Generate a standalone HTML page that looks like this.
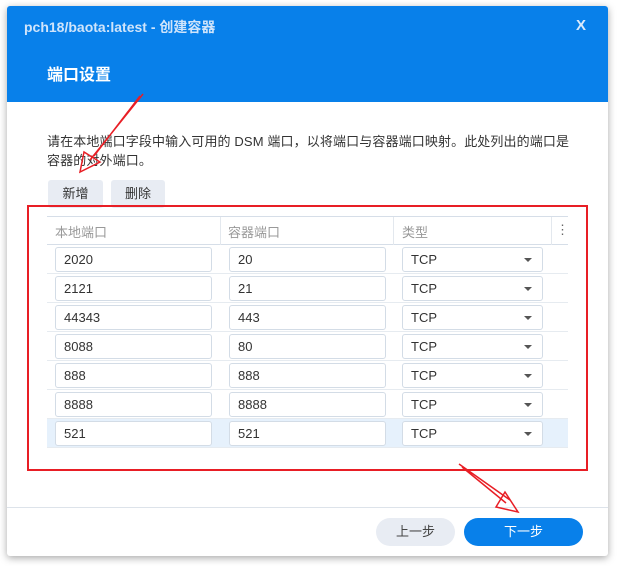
<!DOCTYPE html>
<html><head><meta charset="utf-8"><style>
*{box-sizing:border-box;margin:0;padding:0}
body{width:624px;height:566px;background:#fff;font-family:"Liberation Sans","Noto Sans CJK SC",sans-serif;position:relative;overflow:hidden}
.dlg{position:absolute;left:7px;top:6px;width:601px;height:550px;background:#fff;box-shadow:0 2px 8px rgba(0,0,0,.35);border-radius:3px;overflow:hidden}
.hd{position:absolute;left:0;top:0;width:601px;height:96px;background:#0880ea}
.t1{position:absolute;left:17px;top:11px;color:#cfe4fb;font-size:14px;font-weight:bold}
.x{position:absolute;right:22px;top:11px;color:#dbeafc;font-size:15px;font-weight:bold}
.t2{position:absolute;left:40px;top:55px;color:#fff;font-size:16px;font-weight:bold}
.desc{position:absolute;left:40px;top:126px;color:#333;font-size:13px;line-height:19px;width:560px;letter-spacing:0.12px}
.btn{position:absolute;top:174px;height:28px;background:#e8ecf3;border-radius:3px;font-size:13px;color:#333;line-height:28px;text-align:center}
.red{position:absolute;left:20px;top:199px;width:561px;height:266px;border:2px solid #e81e25}
.th{position:absolute;top:210px;height:29px;border-top:1px solid #d6dee8;border-bottom:1px solid #d6dee8;left:40px;width:521px;font-size:13px;color:#999}
.th span{position:absolute;top:5px}
.vl{position:absolute;top:0;width:1px;height:28px;background:#e3e8ee}
.row{position:absolute;left:40px;width:521px;height:29px;border-bottom:1px solid #e6ebf0}
.in{position:absolute;top:2px;height:25px;border:1px solid #d3dce6;border-radius:3px;background:#fff;font-size:13px;color:#333;padding-left:8px;line-height:23px}
.ar{position:absolute;right:10px;top:10px;width:0;height:0;border-left:4px solid transparent;border-right:4px solid transparent;border-top:4px solid #555}
.ft{position:absolute;left:0;top:501px;width:601px;height:1px;background:#dde3ea}
.pb{position:absolute;top:512px;height:28px;border-radius:14px;font-size:13px;line-height:28px;text-align:center}
</style></head><body>
<div class="dlg">
<div class="hd"><div class="t1">pch18/baota:latest - 创建容器</div><div class="x">X</div><div class="t2">端口设置</div></div>
<div class="desc">请在本地端口字段中输入可用的 DSM 端口，以将端口与容器端口映射。此处列出的端口是<br>容器的对外端口。</div>
<div class="btn" style="left:41px;width:55px">新增</div>
<div class="btn" style="left:104px;width:54px">删除</div>
<div class="th"><span style="left:8px">本地端口</span><span style="left:181px">容器端口</span><span style="left:355px">类型</span><span style="left:509px;color:#666">⋮</span>
<div class="vl" style="left:173px"></div><div class="vl" style="left:346px"></div><div class="vl" style="left:504px"></div></div>
<div class="row" style="top:239px"><div class="in" style="left:8px;width:157px">2020</div><div class="in" style="left:182px;width:157px">20</div><div class="in" style="left:355px;width:141px">TCP<div class="ar"></div></div></div>
<div class="row" style="top:268px"><div class="in" style="left:8px;width:157px">2121</div><div class="in" style="left:182px;width:157px">21</div><div class="in" style="left:355px;width:141px">TCP<div class="ar"></div></div></div>
<div class="row" style="top:297px"><div class="in" style="left:8px;width:157px">44343</div><div class="in" style="left:182px;width:157px">443</div><div class="in" style="left:355px;width:141px">TCP<div class="ar"></div></div></div>
<div class="row" style="top:326px"><div class="in" style="left:8px;width:157px">8088</div><div class="in" style="left:182px;width:157px">80</div><div class="in" style="left:355px;width:141px">TCP<div class="ar"></div></div></div>
<div class="row" style="top:355px"><div class="in" style="left:8px;width:157px">888</div><div class="in" style="left:182px;width:157px">888</div><div class="in" style="left:355px;width:141px">TCP<div class="ar"></div></div></div>
<div class="row" style="top:384px"><div class="in" style="left:8px;width:157px">8888</div><div class="in" style="left:182px;width:157px">8888</div><div class="in" style="left:355px;width:141px">TCP<div class="ar"></div></div></div>
<div class="row" style="top:413px;background:#e6f1fc"><div class="in" style="left:8px;width:157px">521</div><div class="in" style="left:182px;width:157px">521</div><div class="in" style="left:355px;width:141px">TCP<div class="ar"></div></div></div>
<div class="red"></div>
<div class="ft"></div>
<div class="pb" style="left:369px;width:79px;background:#e8ecf3;color:#444">上一步</div>
<div class="pb" style="left:457px;width:119px;background:#0880ea;color:#fff">下一步</div>
</div>
<svg width="624" height="566" style="position:absolute;left:0;top:0" fill="none" stroke="#e81e25" stroke-width="1.5">
<path d="M143 94 L90 160 M140 96 L94 156 M84 152 L80 172 L100 162 Z"/>
<path d="M459 464 L510 500 M462 467 L506 503 M505 492 L518 512 L496 507 Z"/>
</svg>
</body></html>
